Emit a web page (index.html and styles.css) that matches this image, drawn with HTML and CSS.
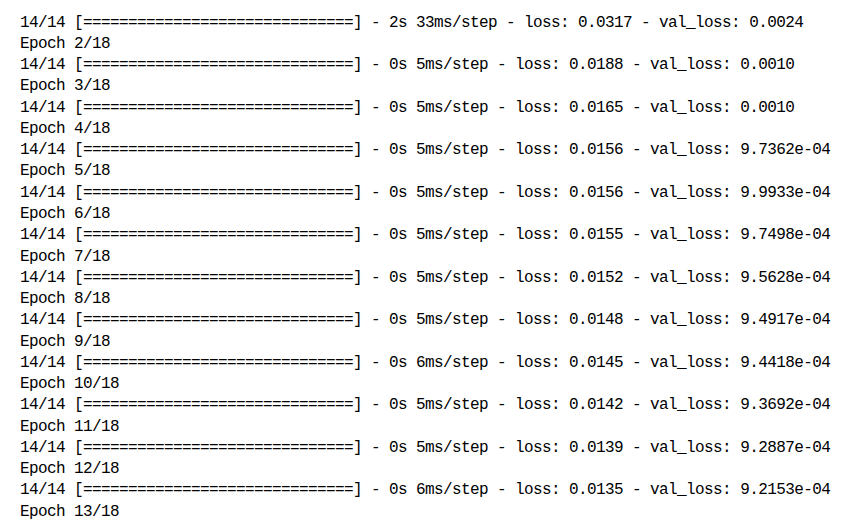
FILE: index.html
```html
<!DOCTYPE html>
<html>
<head>
<meta charset="utf-8">
<link rel="stylesheet" href="styles.css">
</head>
<body>
<pre class="log">14/14 [==============================] - 2s 33ms/step - loss: 0.0317 - val_loss: 0.0024
Epoch 2/18
14/14 [==============================] - 0s 5ms/step - loss: 0.0188 - val_loss: 0.0010
Epoch 3/18
14/14 [==============================] - 0s 5ms/step - loss: 0.0165 - val_loss: 0.0010
Epoch 4/18
14/14 [==============================] - 0s 5ms/step - loss: 0.0156 - val_loss: 9.7362e-04
Epoch 5/18
14/14 [==============================] - 0s 5ms/step - loss: 0.0156 - val_loss: 9.9933e-04
Epoch 6/18
14/14 [==============================] - 0s 5ms/step - loss: 0.0155 - val_loss: 9.7498e-04
Epoch 7/18
14/14 [==============================] - 0s 5ms/step - loss: 0.0152 - val_loss: 9.5628e-04
Epoch 8/18
14/14 [==============================] - 0s 5ms/step - loss: 0.0148 - val_loss: 9.4917e-04
Epoch 9/18
14/14 [==============================] - 0s 6ms/step - loss: 0.0145 - val_loss: 9.4418e-04
Epoch 10/18
14/14 [==============================] - 0s 5ms/step - loss: 0.0142 - val_loss: 9.3692e-04
Epoch 11/18
14/14 [==============================] - 0s 5ms/step - loss: 0.0139 - val_loss: 9.2887e-04
Epoch 12/18
14/14 [==============================] - 0s 6ms/step - loss: 0.0135 - val_loss: 9.2153e-04
Epoch 13/18</pre>
</body>
</html>
```
FILE: styles.css
```css
html, body {
  margin: 0;
  padding: 0;
  background: #ffffff;
}
body {
  padding: 12.6px 0 0 20px;
}
.log {
  margin: 0;
  font-family: "Liberation Mono", "DejaVu Sans Mono", monospace;
  font-size: 16px;
  letter-spacing: -0.6px;
  line-height: 21.26px;
  color: #000000;
  white-space: pre;
}
```
